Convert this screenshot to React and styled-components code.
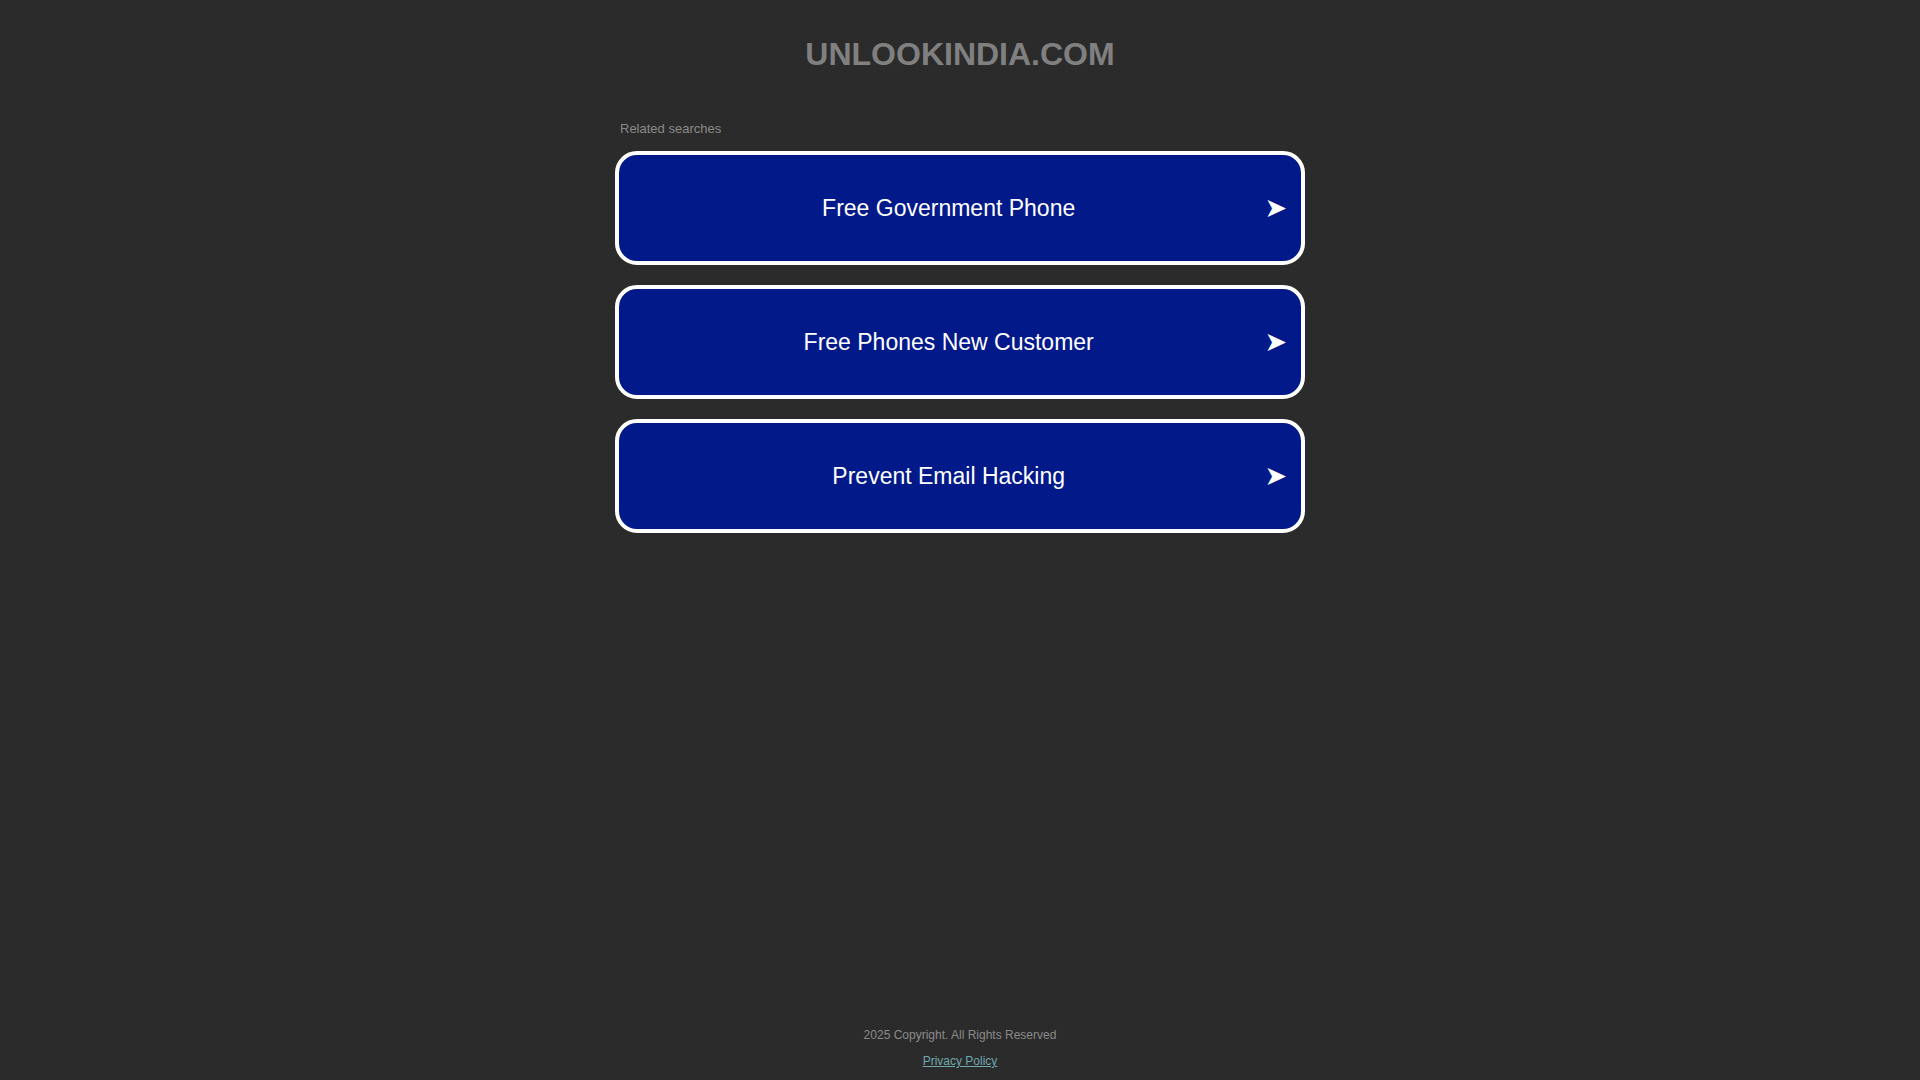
import React from 'react'
import styled, { createGlobalStyle } from 'styled-components'

const GlobalStyle = createGlobalStyle`
html, body { margin: 0; padding: 0; height: 100%; }
body { background-color: #2b2b2b; font-family: 'Liberation Sans', Arial, sans-serif; }
#root { min-height: 100%; }
`

const Page = styled.div`
min-height: 100vh;
display: flex;
flex-direction: column;
align-items: center;
`

const Title = styled.h1`
margin: 0;
padding-top: 36px;
font-size: 32px;
line-height: 36px;
font-weight: 700;
color: #808080;
`

const Content = styled.div`
width: 690px;
margin-top: 49px;
flex: 1;
`

const Heading = styled.div`
font-size: 13px;
line-height: 15px;
color: #8a8a8a;
padding-left: 5px;
margin-bottom: 15px;
`

const List = styled.div`
display: flex;
flex-direction: column;
gap: 20px;
`

const Item = styled.a`
height: 114px;
box-sizing: border-box;
border: 4px solid #ffffff;
border-radius: 22px;
background-color: #021989;
display: flex;
align-items: center;
padding: 0 14px 0 14px;
color: #ffffff;
text-decoration: none;
cursor: pointer;
`

const Label = styled.span`
flex: 1;
text-align: center;
font-size: 23px;
`

const Arrow = styled.span`
font-family: 'DejaVu Sans', sans-serif;
font-size: 27px;
line-height: 1;
padding-bottom: 2px;
`

const Footer = styled.footer`
display: flex;
flex-direction: column;
align-items: center;
gap: 12px;
padding-bottom: 12px;
font-size: 12px;
color: #8a8a8a;
`

const Link = styled.a`
color: #6fa8ad;
text-decoration: underline;
`

const searches = ['Free Government Phone', 'Free Phones New Customer', 'Prevent Email Hacking']

const App = () => {
  return (
    <>
      <GlobalStyle />
      <Page>
        <Title>UNLOOKINDIA.COM</Title>
        <Content>
          <Heading>Related searches</Heading>
          <List>
            {searches.map(s => (
              <Item key={s}>
                <Label>{s}</Label>
                <Arrow>➤</Arrow>
              </Item>
            ))}
          </List>
        </Content>
        <Footer>
          <div>2025 Copyright. All Rights Reserved</div>
          <Link href="#">Privacy Policy</Link>
        </Footer>
      </Page>
    </>
  )
}

export default App
